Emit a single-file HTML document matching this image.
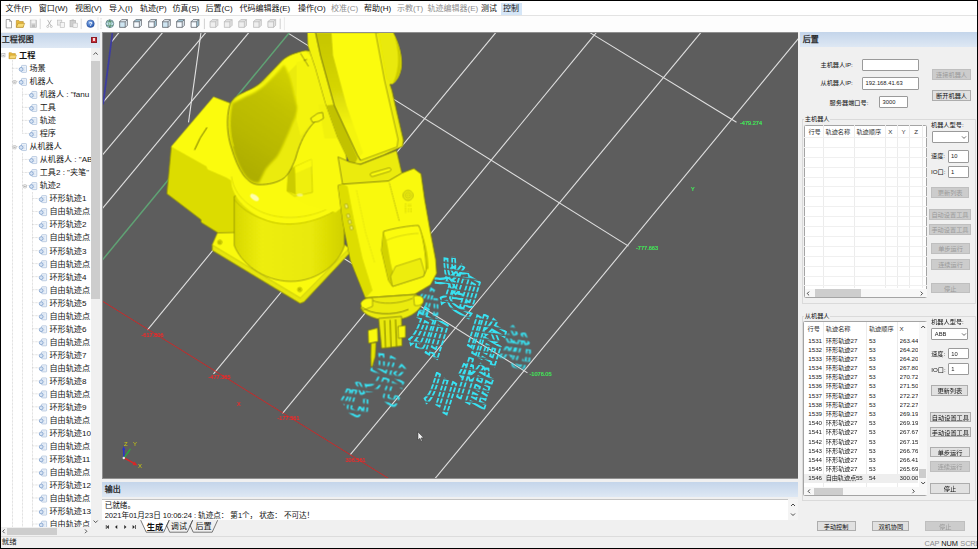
<!DOCTYPE html><html lang="zh"><head><meta charset="utf-8"><title>后置</title><style>
*{box-sizing:border-box;margin:0;padding:0}
html,body{width:978px;height:549px;overflow:hidden;background:#000}
body{position:relative;font-family:"Liberation Sans","Noto Sans CJK SC",sans-serif;font-size:8px;color:#000;line-height:1}
.a{position:absolute;white-space:nowrap}
#app{position:absolute;left:1px;top:1px;width:975.5px;height:546.5px;background:#f0f0f0;overflow:hidden;filter:blur(0.35px)}
.t{position:absolute;white-space:nowrap;line-height:10px;height:10px}
.g{color:#8a8a8a}
.hdr{position:absolute;background:linear-gradient(#c4d5ea,#dee8f4);}
.btn{position:absolute;background:#e1e1e1;border:0.6px solid #adadad;text-align:center;font-size:6.2px;white-space:nowrap;overflow:hidden;color:#111}
.btn.d{background:#cccccc;border-color:#bfbfbf;color:#9a9a9a}
.inp{position:absolute;background:#fff;border:0.7px solid #9a9a9a;border-radius:1px;font-size:5.8px;white-space:nowrap;overflow:hidden;color:#222}
.lb{position:absolute;background:#fff;border:0.8px solid #a4a4a4;border-radius:1.5px;overflow:hidden}
.sm{font-size:6.2px;position:absolute;white-space:nowrap;line-height:8px;height:8px;color:#222}
.lab{font-size:6.2px;position:absolute;white-space:nowrap;line-height:8px;height:8px;color:#111}
</style></head><body><div id="app"><div class="a" style="left:0.00px;top:0.00px;width:976.00px;height:14.60px;background:#fff"></div><div class="a" style="left:0.00px;top:14.40px;width:976.00px;height:0.80px;background:#e3e3e3"></div><div class="a" style="left:0.00px;top:15.20px;width:976.00px;height:15.80px;background:#fdfdfd"></div><div class="t" style="left:4.50px;top:2.80px;color:#111">文件(F)</div><div class="t" style="left:37.80px;top:2.80px;color:#111">窗口(W)</div><div class="t" style="left:74.00px;top:2.80px;color:#111">视图(V)</div><div class="t" style="left:108.00px;top:2.80px;color:#111">导入(I)</div><div class="t" style="left:139.00px;top:2.80px;color:#111">轨迹(P)</div><div class="t" style="left:171.50px;top:2.80px;color:#111">仿真(S)</div><div class="t" style="left:204.50px;top:2.80px;color:#111">后置(C)</div><div class="t" style="left:238.50px;top:2.80px;color:#111">代码编辑器(E)</div><div class="t" style="left:297.00px;top:2.80px;color:#111">操作(O)</div><div class="t" style="left:330.00px;top:2.80px;color:#8d8d8d">校准(C)</div><div class="t" style="left:363.00px;top:2.80px;color:#111">帮助(H)</div><div class="t" style="left:396.00px;top:2.80px;color:#8d8d8d">示教(T)</div><div class="t" style="left:426.50px;top:2.80px;color:#8d8d8d">轨迹编辑器(E)</div><div class="t" style="left:480.00px;top:2.80px;color:#111">测试</div><div class="a" style="left:500.00px;top:1.50px;width:20.50px;height:12.50px;background:#d5e6f7"></div><div class="t" style="left:502.00px;top:2.80px;color:#111">控制</div><svg class="a" style="left:0px;top:15px" width="300" height="16" viewBox="1 16 300 16"><g filter="url(#tbl)"><defs><filter id="tbl"><feGaussianBlur stdDeviation="0.35"/></filter><radialGradient id="hb" cx="0.4" cy="0.35" r="0.7"><stop offset="0" stop-color="#8ab4ee"/><stop offset="1" stop-color="#1f4fa8"/></radialGradient></defs><path d="M6.2 19.5 h3.4 l1.9 1.9 v6.5 h-5.3z" fill="#fff" stroke="#6c6c6c" stroke-width="0.6"/><path d="M9.6 19.5 v1.9 h1.9" fill="none" stroke="#6c6c6c" stroke-width="0.5"/><path d="M16.3 20.5 h2.6 l0.8 1 h3.6 v5.8 h-7z" fill="#e8b93a" stroke="#a87c18" stroke-width="0.5"/><path d="M16.3 27.3 l1.8 -4 h6.6 l-1.6 4z" fill="#f7da72" stroke="#a87c18" stroke-width="0.5"/><rect x="30.2" y="20.099999999999998" width="6.4" height="7.2" fill="#d9d9d9" stroke="#b5b5b5" stroke-width="0.6"/><rect x="31.6" y="20.3" width="3.6" height="2.8" fill="#f2f2f2"/><rect x="31.8" y="24.5" width="3.2" height="2.6" fill="#bdbdbd"/><path d="M40.2 18.7 v10.4" stroke="#c9c9c9" stroke-width="0.7"/><path d="M47.6 19.9 L51 25.7 M51.4 19.9 L48 25.7" stroke="#a9a9a9" stroke-width="0.8" fill="none"/><circle cx="47.7" cy="26.5" r="1" fill="none" stroke="#a9a9a9" stroke-width="0.6"/><circle cx="51.3" cy="26.5" r="1" fill="none" stroke="#a9a9a9" stroke-width="0.6"/><rect x="57.6" y="20.099999999999998" width="4.2" height="5" fill="#ececec" stroke="#b9b9b9" stroke-width="0.6"/><rect x="60.2" y="22.5" width="4.4" height="5" fill="#f4f4f4" stroke="#b9b9b9" stroke-width="0.6"/><rect x="70" y="20.3" width="5.6" height="6.6" fill="#cfcfcf" stroke="#aeaeae" stroke-width="0.6"/><rect x="71.6" y="19.5" width="2.4" height="1.6" fill="#bdbdbd"/><rect x="73" y="23.099999999999998" width="4.6" height="4.6" fill="#f1f1f1" stroke="#b5b5b5" stroke-width="0.5"/><path d="M81.2 18.7 v10.4" stroke="#c9c9c9" stroke-width="0.7"/><circle cx="90.5" cy="23.7" r="3.8" fill="url(#hb)" stroke="#1b3f8a" stroke-width="0.4"/><text x="88.9" y="25.8" font-family="Liberation Sans, sans-serif" font-size="5.8" font-weight="bold" fill="#fff">?</text><path d="M98 17.2 v13" stroke="#dcdcdc" stroke-width="0.6"/><path d="M101 18.2 v11" stroke="#b5b5b5" stroke-width="0.7" stroke-dasharray="0.7 0.7"/><circle cx="109.8" cy="23.7" r="3.9" fill="#bfe0ea" stroke="#4d6a78" stroke-width="0.7"/><path d="M106.5 22.2 q3.3 -2 6.6 0 M106.3 25.2 q3.5 2 7 0 M109.8 19.8 q-2.4 3.9 0 7.8 M109.8 19.8 q2.4 3.9 0 7.8" fill="none" stroke="#3f7a4a" stroke-width="0.6"/><g transform="translate(119.3 19.299999999999997)" stroke="#5a6066" stroke-width="0.6" stroke-linejoin="round"><path d="M0.4 2.4 L2.4 0.4 H8 V6 L6 8 H0.4Z" fill="#ffffff"/><path d="M0.4 2.4 H6 V8 H0.4Z" fill="#cfe6f2"/><path d="M0.4 2.4 L2.4 0.4 H8 L6 2.4Z" fill="#eef6fb"/><path d="M6 2.4 L8 0.4 V6 L6 8Z" fill="#e4eff6"/></g><g transform="translate(133.4 19.299999999999997)" stroke="#5a6066" stroke-width="0.6" stroke-linejoin="round"><path d="M0.4 2.4 L2.4 0.4 H8 V6 L6 8 H0.4Z" fill="#ffffff"/><path d="M0.4 2.4 H6 V8 H0.4Z" fill="#f6fbff"/><path d="M0.4 2.4 L2.4 0.4 H8 L6 2.4Z" fill="#a8cfe0"/><path d="M6 2.4 L8 0.4 V6 L6 8Z" fill="#e4eff6"/></g><g transform="translate(148.3 19.299999999999997)" stroke="#5a6066" stroke-width="0.6" stroke-linejoin="round"><path d="M0.4 2.4 L2.4 0.4 H8 V6 L6 8 H0.4Z" fill="#ffffff"/><path d="M0.4 2.4 H6 V8 H0.4Z" fill="#f6fbff"/><path d="M0.4 2.4 L2.4 0.4 H8 L6 2.4Z" fill="#eef6fb"/><path d="M6 2.4 L8 0.4 V6 L6 8Z" fill="#a8cfe0"/></g><g transform="translate(162.2 19.299999999999997)" stroke="#5a6066" stroke-width="0.6" stroke-linejoin="round"><path d="M0.4 2.4 L2.4 0.4 H8 V6 L6 8 H0.4Z" fill="#ffffff"/><path d="M0.4 2.4 H6 V8 H0.4Z" fill="#cfe6f2"/><path d="M0.4 2.4 L2.4 0.4 H8 L6 2.4Z" fill="#eef6fb"/><path d="M6 2.4 L8 0.4 V6 L6 8Z" fill="#e4eff6"/></g><g transform="translate(176.3 19.299999999999997)" stroke="#5a6066" stroke-width="0.6" stroke-linejoin="round"><path d="M0.4 2.4 L2.4 0.4 H8 V6 L6 8 H0.4Z" fill="#ffffff"/><path d="M0.4 2.4 H6 V8 H0.4Z" fill="#f6fbff"/><path d="M0.4 2.4 L2.4 0.4 H8 L6 2.4Z" fill="#a8cfe0"/><path d="M6 2.4 L8 0.4 V6 L6 8Z" fill="#e4eff6"/></g><g transform="translate(190.8 19.299999999999997)" stroke="#5a6066" stroke-width="0.6" stroke-linejoin="round"><path d="M0.4 2.4 L2.4 0.4 H8 V6 L6 8 H0.4Z" fill="#ffffff"/><path d="M0.4 2.4 H6 V8 H0.4Z" fill="#f6fbff"/><path d="M0.4 2.4 L2.4 0.4 H8 L6 2.4Z" fill="#eef6fb"/><path d="M6 2.4 L8 0.4 V6 L6 8Z" fill="#a8cfe0"/></g><path d="M204.4 18.7 v10.4" stroke="#bdbdbd" stroke-width="0.7"/><g transform="translate(209.8 19.299999999999997)" stroke="#b9b9b9" stroke-width="0.6" stroke-linejoin="round"><path d="M0.4 2.4 L2.4 0.4 H8 V6 L6 8 H0.4Z" fill="#ffffff"/><path d="M0.4 2.4 H6 V8 H0.4Z" fill="#efefef"/><path d="M0.4 2.4 L2.4 0.4 H8 L6 2.4Z" fill="#e4e4e4"/><path d="M6 2.4 L8 0.4 V6 L6 8Z" fill="#e4e4e4"/></g><g transform="translate(224 19.299999999999997)" stroke="#b9b9b9" stroke-width="0.6" stroke-linejoin="round"><path d="M0.4 2.4 L2.4 0.4 H8 V6 L6 8 H0.4Z" fill="#ffffff"/><path d="M0.4 2.4 H6 V8 H0.4Z" fill="#efefef"/><path d="M0.4 2.4 L2.4 0.4 H8 L6 2.4Z" fill="#e4e4e4"/><path d="M6 2.4 L8 0.4 V6 L6 8Z" fill="#e4e4e4"/></g><g transform="translate(238.4 19.299999999999997)" stroke="#b9b9b9" stroke-width="0.6" stroke-linejoin="round"><path d="M0.4 2.4 L2.4 0.4 H8 V6 L6 8 H0.4Z" fill="#ffffff"/><path d="M0.4 2.4 H6 V8 H0.4Z" fill="#efefef"/><path d="M0.4 2.4 L2.4 0.4 H8 L6 2.4Z" fill="#e4e4e4"/><path d="M6 2.4 L8 0.4 V6 L6 8Z" fill="#e4e4e4"/></g><g transform="translate(253.2 19.299999999999997)" stroke="#b9b9b9" stroke-width="0.6" stroke-linejoin="round"><path d="M0.4 2.4 L2.4 0.4 H8 V6 L6 8 H0.4Z" fill="#ffffff"/><path d="M0.4 2.4 H6 V8 H0.4Z" fill="#efefef"/><path d="M0.4 2.4 L2.4 0.4 H8 L6 2.4Z" fill="#e4e4e4"/><path d="M6 2.4 L8 0.4 V6 L6 8Z" fill="#e4e4e4"/></g><g transform="translate(267.6 19.299999999999997)" stroke="#b9b9b9" stroke-width="0.6" stroke-linejoin="round"><path d="M0.4 2.4 L2.4 0.4 H8 V6 L6 8 H0.4Z" fill="#ffffff"/><path d="M0.4 2.4 H6 V8 H0.4Z" fill="#efefef"/><path d="M0.4 2.4 L2.4 0.4 H8 L6 2.4Z" fill="#e4e4e4"/><path d="M6 2.4 L8 0.4 V6 L6 8Z" fill="#e4e4e4"/></g><path d="M280.2 18.7 v10.4" stroke="#bdbdbd" stroke-width="0.7"/><path d="M284.4 17.2 v13" stroke="#dcdcdc" stroke-width="0.6"/></g></svg><div class="hdr" style="left:0.00px;top:31.50px;width:99.30px;height:15.00px;"></div><div class="t" style="left:0.80px;top:34.00px;font-size:8px;color:#1a1a1a;-webkit-text-stroke:0.25px #1a1a1a">工程视图</div><div class="a" style="left:90.30px;top:35.80px;width:5.80px;height:6.00px;background:#c8303a;border:0.5px solid #8d1c24"></div><div class="a" style="left:92.40px;top:37.20px;width:1.50px;height:3.20px;background:#f3dada"></div><div class="a" style="left:0.00px;top:47.00px;width:90.00px;height:479.00px;background:#fff"></div><div class="a" style="left:90.00px;top:47.00px;width:9.30px;height:479.00px;background:#f0f0f0"></div><div class="a" style="left:90.40px;top:60.00px;width:8.50px;height:238.00px;background:#cdcdcd"></div><svg class="a" style="left:90px;top:47px" width="9.3" height="479" viewBox="0 0 9.3 479"><path d="M2.6 6.6 L4.65 4.5 L6.7 6.6" fill="none" stroke="#444" stroke-width="0.9"/><path d="M2.6 472.6 L4.65 474.7 L6.7 472.6" fill="none" stroke="#444" stroke-width="0.9"/></svg><svg class="a" style="left:0px;top:47px" width="90" height="479" viewBox="1 48 90 479"><g stroke="#b9b9b9" stroke-width="0.6" stroke-dasharray="0.7 0.7" fill="none"><path d="M12.5 60 V527"/><path d="M22.5 88 V133"/><path d="M22.5 153 V527"/><path d="M32.5 192 V527"/><path d="M11.9 68.32 H18.4"/><path d="M11.9 81.34 H18.4"/><path d="M22.2 94.36 H28.7"/><path d="M22.2 107.38 H28.7"/><path d="M22.2 120.39999999999999 H28.7"/><path d="M22.2 133.42000000000002 H28.7"/><path d="M11.9 146.44 H18.4"/><path d="M22.2 159.45999999999998 H28.7"/><path d="M22.2 172.48 H28.7"/><path d="M22.2 185.5 H28.7"/><path d="M32.0 198.51999999999998 H38.5"/><path d="M32.0 211.54000000000002 H38.5"/><path d="M32.0 224.56 H38.5"/><path d="M32.0 237.57999999999998 H38.5"/><path d="M32.0 250.59999999999997 H38.5"/><path d="M32.0 263.62 H38.5"/><path d="M32.0 276.64 H38.5"/><path d="M32.0 289.65999999999997 H38.5"/><path d="M32.0 302.68 H38.5"/><path d="M32.0 315.7 H38.5"/><path d="M32.0 328.72 H38.5"/><path d="M32.0 341.74 H38.5"/><path d="M32.0 354.76 H38.5"/><path d="M32.0 367.78000000000003 H38.5"/><path d="M32.0 380.8 H38.5"/><path d="M32.0 393.82 H38.5"/><path d="M32.0 406.84 H38.5"/><path d="M32.0 419.86 H38.5"/><path d="M32.0 432.88 H38.5"/><path d="M32.0 445.9 H38.5"/><path d="M32.0 458.92 H38.5"/><path d="M32.0 471.94 H38.5"/><path d="M32.0 484.96 H38.5"/><path d="M32.0 497.98 H38.5"/><path d="M32.0 511.0 H38.5"/><path d="M32.0 524.02 H38.5"/></g><path d="M9.0 52.699999999999996 h2.4 l0.8 0.9 h3.2 v5 h-6.4z" fill="#e9b93c" stroke="#b98b1e" stroke-width="0.5"/><path d="M9.0 58.599999999999994 l1.3 -3.4 h6.2 l-1.2 3.4z" fill="#f6d774" stroke="#b98b1e" stroke-width="0.4"/><rect x="1.8" y="53.699999999999996" width="3.2" height="3.2" fill="#fff" stroke="#9a9a9a" stroke-width="0.5"/><path d="M2.5 55.3 h1.8" stroke="#444" stroke-width="0.5"/><g transform="translate(19.1 69.11999999999999)"><rect x="2.4" y="-3.7" width="5" height="7" rx="0.6" fill="#eef4fb" stroke="#9ab2d2" stroke-width="0.6"/><path d="M3.6 -1.8 h2.6 M3.6 -0.2 h2.6 M3.6 1.4 h2.6" stroke="#bccbe0" stroke-width="0.4"/><circle cx="2" cy="0.2" r="1.9" fill="#d6e3f3" stroke="#6f94c6" stroke-width="0.7"/></g><g transform="translate(19.1 82.14)"><rect x="2.4" y="-3.7" width="5" height="7" rx="0.6" fill="#eef4fb" stroke="#9ab2d2" stroke-width="0.6"/><path d="M3.6 -1.8 h2.6 M3.6 -0.2 h2.6 M3.6 1.4 h2.6" stroke="#bccbe0" stroke-width="0.4"/><circle cx="2" cy="0.2" r="1.9" fill="#d6e3f3" stroke="#6f94c6" stroke-width="0.7"/></g><rect x="13.0" y="80.54" width="3.2" height="3.2" rx="0.8" fill="#fff" stroke="#9a9a9a" stroke-width="0.5"/><path d="M13.7 82.14 h1.8" stroke="#444" stroke-width="0.5"/><g transform="translate(29.4 95.16)"><rect x="2.4" y="-3.7" width="5" height="7" rx="0.6" fill="#eef4fb" stroke="#9ab2d2" stroke-width="0.6"/><path d="M3.6 -1.8 h2.6 M3.6 -0.2 h2.6 M3.6 1.4 h2.6" stroke="#bccbe0" stroke-width="0.4"/><circle cx="2" cy="0.2" r="1.9" fill="#d6e3f3" stroke="#6f94c6" stroke-width="0.7"/></g><g transform="translate(29.4 108.17999999999999)"><rect x="2.4" y="-3.7" width="5" height="7" rx="0.6" fill="#eef4fb" stroke="#9ab2d2" stroke-width="0.6"/><path d="M3.6 -1.8 h2.6 M3.6 -0.2 h2.6 M3.6 1.4 h2.6" stroke="#bccbe0" stroke-width="0.4"/><circle cx="2" cy="0.2" r="1.9" fill="#d6e3f3" stroke="#6f94c6" stroke-width="0.7"/></g><g transform="translate(29.4 121.19999999999999)"><rect x="2.4" y="-3.7" width="5" height="7" rx="0.6" fill="#eef4fb" stroke="#9ab2d2" stroke-width="0.6"/><path d="M3.6 -1.8 h2.6 M3.6 -0.2 h2.6 M3.6 1.4 h2.6" stroke="#bccbe0" stroke-width="0.4"/><circle cx="2" cy="0.2" r="1.9" fill="#d6e3f3" stroke="#6f94c6" stroke-width="0.7"/></g><g transform="translate(29.4 134.22000000000003)"><rect x="2.4" y="-3.7" width="5" height="7" rx="0.6" fill="#eef4fb" stroke="#9ab2d2" stroke-width="0.6"/><path d="M3.6 -1.8 h2.6 M3.6 -0.2 h2.6 M3.6 1.4 h2.6" stroke="#bccbe0" stroke-width="0.4"/><circle cx="2" cy="0.2" r="1.9" fill="#d6e3f3" stroke="#6f94c6" stroke-width="0.7"/></g><g transform="translate(19.1 147.24)"><rect x="2.4" y="-3.7" width="5" height="7" rx="0.6" fill="#eef4fb" stroke="#9ab2d2" stroke-width="0.6"/><path d="M3.6 -1.8 h2.6 M3.6 -0.2 h2.6 M3.6 1.4 h2.6" stroke="#bccbe0" stroke-width="0.4"/><circle cx="2" cy="0.2" r="1.9" fill="#d6e3f3" stroke="#6f94c6" stroke-width="0.7"/></g><rect x="13.0" y="145.64" width="3.2" height="3.2" rx="0.8" fill="#fff" stroke="#9a9a9a" stroke-width="0.5"/><path d="M13.7 147.24 h1.8" stroke="#444" stroke-width="0.5"/><g transform="translate(29.4 160.26)"><rect x="2.4" y="-3.7" width="5" height="7" rx="0.6" fill="#eef4fb" stroke="#9ab2d2" stroke-width="0.6"/><path d="M3.6 -1.8 h2.6 M3.6 -0.2 h2.6 M3.6 1.4 h2.6" stroke="#bccbe0" stroke-width="0.4"/><circle cx="2" cy="0.2" r="1.9" fill="#d6e3f3" stroke="#6f94c6" stroke-width="0.7"/></g><g transform="translate(29.4 173.28)"><rect x="2.4" y="-3.7" width="5" height="7" rx="0.6" fill="#eef4fb" stroke="#9ab2d2" stroke-width="0.6"/><path d="M3.6 -1.8 h2.6 M3.6 -0.2 h2.6 M3.6 1.4 h2.6" stroke="#bccbe0" stroke-width="0.4"/><circle cx="2" cy="0.2" r="1.9" fill="#d6e3f3" stroke="#6f94c6" stroke-width="0.7"/></g><g transform="translate(29.4 186.3)"><rect x="2.4" y="-3.7" width="5" height="7" rx="0.6" fill="#eef4fb" stroke="#9ab2d2" stroke-width="0.6"/><path d="M3.6 -1.8 h2.6 M3.6 -0.2 h2.6 M3.6 1.4 h2.6" stroke="#bccbe0" stroke-width="0.4"/><circle cx="2" cy="0.2" r="1.9" fill="#d6e3f3" stroke="#6f94c6" stroke-width="0.7"/></g><rect x="23.3" y="184.7" width="3.2" height="3.2" rx="0.8" fill="#fff" stroke="#9a9a9a" stroke-width="0.5"/><path d="M24.0 186.3 h1.8" stroke="#444" stroke-width="0.5"/><g transform="translate(39.2 199.32)"><rect x="2.4" y="-3.7" width="5" height="7" rx="0.6" fill="#eef4fb" stroke="#9ab2d2" stroke-width="0.6"/><path d="M3.6 -1.8 h2.6 M3.6 -0.2 h2.6 M3.6 1.4 h2.6" stroke="#bccbe0" stroke-width="0.4"/><circle cx="2" cy="0.2" r="1.9" fill="#d6e3f3" stroke="#6f94c6" stroke-width="0.7"/></g><g transform="translate(39.2 212.34000000000003)"><rect x="2.4" y="-3.7" width="5" height="7" rx="0.6" fill="#eef4fb" stroke="#9ab2d2" stroke-width="0.6"/><path d="M3.6 -1.8 h2.6 M3.6 -0.2 h2.6 M3.6 1.4 h2.6" stroke="#bccbe0" stroke-width="0.4"/><circle cx="2" cy="0.2" r="1.9" fill="#d6e3f3" stroke="#6f94c6" stroke-width="0.7"/></g><g transform="translate(39.2 225.36)"><rect x="2.4" y="-3.7" width="5" height="7" rx="0.6" fill="#eef4fb" stroke="#9ab2d2" stroke-width="0.6"/><path d="M3.6 -1.8 h2.6 M3.6 -0.2 h2.6 M3.6 1.4 h2.6" stroke="#bccbe0" stroke-width="0.4"/><circle cx="2" cy="0.2" r="1.9" fill="#d6e3f3" stroke="#6f94c6" stroke-width="0.7"/></g><g transform="translate(39.2 238.38)"><rect x="2.4" y="-3.7" width="5" height="7" rx="0.6" fill="#eef4fb" stroke="#9ab2d2" stroke-width="0.6"/><path d="M3.6 -1.8 h2.6 M3.6 -0.2 h2.6 M3.6 1.4 h2.6" stroke="#bccbe0" stroke-width="0.4"/><circle cx="2" cy="0.2" r="1.9" fill="#d6e3f3" stroke="#6f94c6" stroke-width="0.7"/></g><g transform="translate(39.2 251.39999999999998)"><rect x="2.4" y="-3.7" width="5" height="7" rx="0.6" fill="#eef4fb" stroke="#9ab2d2" stroke-width="0.6"/><path d="M3.6 -1.8 h2.6 M3.6 -0.2 h2.6 M3.6 1.4 h2.6" stroke="#bccbe0" stroke-width="0.4"/><circle cx="2" cy="0.2" r="1.9" fill="#d6e3f3" stroke="#6f94c6" stroke-width="0.7"/></g><g transform="translate(39.2 264.42)"><rect x="2.4" y="-3.7" width="5" height="7" rx="0.6" fill="#eef4fb" stroke="#9ab2d2" stroke-width="0.6"/><path d="M3.6 -1.8 h2.6 M3.6 -0.2 h2.6 M3.6 1.4 h2.6" stroke="#bccbe0" stroke-width="0.4"/><circle cx="2" cy="0.2" r="1.9" fill="#d6e3f3" stroke="#6f94c6" stroke-width="0.7"/></g><g transform="translate(39.2 277.44)"><rect x="2.4" y="-3.7" width="5" height="7" rx="0.6" fill="#eef4fb" stroke="#9ab2d2" stroke-width="0.6"/><path d="M3.6 -1.8 h2.6 M3.6 -0.2 h2.6 M3.6 1.4 h2.6" stroke="#bccbe0" stroke-width="0.4"/><circle cx="2" cy="0.2" r="1.9" fill="#d6e3f3" stroke="#6f94c6" stroke-width="0.7"/></g><g transform="translate(39.2 290.46)"><rect x="2.4" y="-3.7" width="5" height="7" rx="0.6" fill="#eef4fb" stroke="#9ab2d2" stroke-width="0.6"/><path d="M3.6 -1.8 h2.6 M3.6 -0.2 h2.6 M3.6 1.4 h2.6" stroke="#bccbe0" stroke-width="0.4"/><circle cx="2" cy="0.2" r="1.9" fill="#d6e3f3" stroke="#6f94c6" stroke-width="0.7"/></g><g transform="translate(39.2 303.48)"><rect x="2.4" y="-3.7" width="5" height="7" rx="0.6" fill="#eef4fb" stroke="#9ab2d2" stroke-width="0.6"/><path d="M3.6 -1.8 h2.6 M3.6 -0.2 h2.6 M3.6 1.4 h2.6" stroke="#bccbe0" stroke-width="0.4"/><circle cx="2" cy="0.2" r="1.9" fill="#d6e3f3" stroke="#6f94c6" stroke-width="0.7"/></g><g transform="translate(39.2 316.5)"><rect x="2.4" y="-3.7" width="5" height="7" rx="0.6" fill="#eef4fb" stroke="#9ab2d2" stroke-width="0.6"/><path d="M3.6 -1.8 h2.6 M3.6 -0.2 h2.6 M3.6 1.4 h2.6" stroke="#bccbe0" stroke-width="0.4"/><circle cx="2" cy="0.2" r="1.9" fill="#d6e3f3" stroke="#6f94c6" stroke-width="0.7"/></g><g transform="translate(39.2 329.52000000000004)"><rect x="2.4" y="-3.7" width="5" height="7" rx="0.6" fill="#eef4fb" stroke="#9ab2d2" stroke-width="0.6"/><path d="M3.6 -1.8 h2.6 M3.6 -0.2 h2.6 M3.6 1.4 h2.6" stroke="#bccbe0" stroke-width="0.4"/><circle cx="2" cy="0.2" r="1.9" fill="#d6e3f3" stroke="#6f94c6" stroke-width="0.7"/></g><g transform="translate(39.2 342.54)"><rect x="2.4" y="-3.7" width="5" height="7" rx="0.6" fill="#eef4fb" stroke="#9ab2d2" stroke-width="0.6"/><path d="M3.6 -1.8 h2.6 M3.6 -0.2 h2.6 M3.6 1.4 h2.6" stroke="#bccbe0" stroke-width="0.4"/><circle cx="2" cy="0.2" r="1.9" fill="#d6e3f3" stroke="#6f94c6" stroke-width="0.7"/></g><g transform="translate(39.2 355.56)"><rect x="2.4" y="-3.7" width="5" height="7" rx="0.6" fill="#eef4fb" stroke="#9ab2d2" stroke-width="0.6"/><path d="M3.6 -1.8 h2.6 M3.6 -0.2 h2.6 M3.6 1.4 h2.6" stroke="#bccbe0" stroke-width="0.4"/><circle cx="2" cy="0.2" r="1.9" fill="#d6e3f3" stroke="#6f94c6" stroke-width="0.7"/></g><g transform="translate(39.2 368.58000000000004)"><rect x="2.4" y="-3.7" width="5" height="7" rx="0.6" fill="#eef4fb" stroke="#9ab2d2" stroke-width="0.6"/><path d="M3.6 -1.8 h2.6 M3.6 -0.2 h2.6 M3.6 1.4 h2.6" stroke="#bccbe0" stroke-width="0.4"/><circle cx="2" cy="0.2" r="1.9" fill="#d6e3f3" stroke="#6f94c6" stroke-width="0.7"/></g><g transform="translate(39.2 381.6)"><rect x="2.4" y="-3.7" width="5" height="7" rx="0.6" fill="#eef4fb" stroke="#9ab2d2" stroke-width="0.6"/><path d="M3.6 -1.8 h2.6 M3.6 -0.2 h2.6 M3.6 1.4 h2.6" stroke="#bccbe0" stroke-width="0.4"/><circle cx="2" cy="0.2" r="1.9" fill="#d6e3f3" stroke="#6f94c6" stroke-width="0.7"/></g><g transform="translate(39.2 394.62)"><rect x="2.4" y="-3.7" width="5" height="7" rx="0.6" fill="#eef4fb" stroke="#9ab2d2" stroke-width="0.6"/><path d="M3.6 -1.8 h2.6 M3.6 -0.2 h2.6 M3.6 1.4 h2.6" stroke="#bccbe0" stroke-width="0.4"/><circle cx="2" cy="0.2" r="1.9" fill="#d6e3f3" stroke="#6f94c6" stroke-width="0.7"/></g><g transform="translate(39.2 407.64)"><rect x="2.4" y="-3.7" width="5" height="7" rx="0.6" fill="#eef4fb" stroke="#9ab2d2" stroke-width="0.6"/><path d="M3.6 -1.8 h2.6 M3.6 -0.2 h2.6 M3.6 1.4 h2.6" stroke="#bccbe0" stroke-width="0.4"/><circle cx="2" cy="0.2" r="1.9" fill="#d6e3f3" stroke="#6f94c6" stroke-width="0.7"/></g><g transform="translate(39.2 420.66)"><rect x="2.4" y="-3.7" width="5" height="7" rx="0.6" fill="#eef4fb" stroke="#9ab2d2" stroke-width="0.6"/><path d="M3.6 -1.8 h2.6 M3.6 -0.2 h2.6 M3.6 1.4 h2.6" stroke="#bccbe0" stroke-width="0.4"/><circle cx="2" cy="0.2" r="1.9" fill="#d6e3f3" stroke="#6f94c6" stroke-width="0.7"/></g><g transform="translate(39.2 433.68)"><rect x="2.4" y="-3.7" width="5" height="7" rx="0.6" fill="#eef4fb" stroke="#9ab2d2" stroke-width="0.6"/><path d="M3.6 -1.8 h2.6 M3.6 -0.2 h2.6 M3.6 1.4 h2.6" stroke="#bccbe0" stroke-width="0.4"/><circle cx="2" cy="0.2" r="1.9" fill="#d6e3f3" stroke="#6f94c6" stroke-width="0.7"/></g><g transform="translate(39.2 446.7)"><rect x="2.4" y="-3.7" width="5" height="7" rx="0.6" fill="#eef4fb" stroke="#9ab2d2" stroke-width="0.6"/><path d="M3.6 -1.8 h2.6 M3.6 -0.2 h2.6 M3.6 1.4 h2.6" stroke="#bccbe0" stroke-width="0.4"/><circle cx="2" cy="0.2" r="1.9" fill="#d6e3f3" stroke="#6f94c6" stroke-width="0.7"/></g><g transform="translate(39.2 459.72)"><rect x="2.4" y="-3.7" width="5" height="7" rx="0.6" fill="#eef4fb" stroke="#9ab2d2" stroke-width="0.6"/><path d="M3.6 -1.8 h2.6 M3.6 -0.2 h2.6 M3.6 1.4 h2.6" stroke="#bccbe0" stroke-width="0.4"/><circle cx="2" cy="0.2" r="1.9" fill="#d6e3f3" stroke="#6f94c6" stroke-width="0.7"/></g><g transform="translate(39.2 472.74)"><rect x="2.4" y="-3.7" width="5" height="7" rx="0.6" fill="#eef4fb" stroke="#9ab2d2" stroke-width="0.6"/><path d="M3.6 -1.8 h2.6 M3.6 -0.2 h2.6 M3.6 1.4 h2.6" stroke="#bccbe0" stroke-width="0.4"/><circle cx="2" cy="0.2" r="1.9" fill="#d6e3f3" stroke="#6f94c6" stroke-width="0.7"/></g><g transform="translate(39.2 485.76)"><rect x="2.4" y="-3.7" width="5" height="7" rx="0.6" fill="#eef4fb" stroke="#9ab2d2" stroke-width="0.6"/><path d="M3.6 -1.8 h2.6 M3.6 -0.2 h2.6 M3.6 1.4 h2.6" stroke="#bccbe0" stroke-width="0.4"/><circle cx="2" cy="0.2" r="1.9" fill="#d6e3f3" stroke="#6f94c6" stroke-width="0.7"/></g><g transform="translate(39.2 498.78000000000003)"><rect x="2.4" y="-3.7" width="5" height="7" rx="0.6" fill="#eef4fb" stroke="#9ab2d2" stroke-width="0.6"/><path d="M3.6 -1.8 h2.6 M3.6 -0.2 h2.6 M3.6 1.4 h2.6" stroke="#bccbe0" stroke-width="0.4"/><circle cx="2" cy="0.2" r="1.9" fill="#d6e3f3" stroke="#6f94c6" stroke-width="0.7"/></g><g transform="translate(39.2 511.8)"><rect x="2.4" y="-3.7" width="5" height="7" rx="0.6" fill="#eef4fb" stroke="#9ab2d2" stroke-width="0.6"/><path d="M3.6 -1.8 h2.6 M3.6 -0.2 h2.6 M3.6 1.4 h2.6" stroke="#bccbe0" stroke-width="0.4"/><circle cx="2" cy="0.2" r="1.9" fill="#d6e3f3" stroke="#6f94c6" stroke-width="0.7"/></g><g transform="translate(39.2 524.8199999999999)"><rect x="2.4" y="-3.7" width="5" height="7" rx="0.6" fill="#eef4fb" stroke="#9ab2d2" stroke-width="0.6"/><path d="M3.6 -1.8 h2.6 M3.6 -0.2 h2.6 M3.6 1.4 h2.6" stroke="#bccbe0" stroke-width="0.4"/><circle cx="2" cy="0.2" r="1.9" fill="#d6e3f3" stroke="#6f94c6" stroke-width="0.7"/></g></svg><div class="t" style="left:18.00px;top:50.20px;font-size:8.2px;font-weight:bold;color:#111;">工程</div><div class="t" style="left:28.40px;top:63.22px;font-size:8.1px;color:#151515;">场景</div><div class="t" style="left:28.40px;top:76.24px;font-size:8.1px;color:#151515;">机器人</div><div class="t" style="left:38.70px;top:89.26px;font-size:8.1px;color:#151515;">机器人 : "fanu</div><div class="t" style="left:38.70px;top:102.28px;font-size:8.1px;color:#151515;">工具</div><div class="t" style="left:38.70px;top:115.30px;font-size:8.1px;color:#151515;">轨迹</div><div class="t" style="left:38.70px;top:128.32px;font-size:8.1px;color:#151515;">程序</div><div class="t" style="left:28.40px;top:141.34px;font-size:8.1px;color:#151515;">从机器人</div><div class="t" style="left:38.70px;top:154.36px;font-size:8.1px;color:#151515;">从机器人 : "AB</div><div class="t" style="left:38.70px;top:167.38px;font-size:8.1px;color:#151515;">工具2 : "夹笔"</div><div class="t" style="left:38.70px;top:180.40px;font-size:8.1px;color:#151515;">轨迹2</div><div class="t" style="left:48.50px;top:193.42px;font-size:8.1px;color:#151515;">环形轨迹1</div><div class="t" style="left:48.50px;top:206.44px;font-size:8.1px;color:#151515;">自由轨迹点</div><div class="t" style="left:48.50px;top:219.46px;font-size:8.1px;color:#151515;">环形轨迹2</div><div class="t" style="left:48.50px;top:232.48px;font-size:8.1px;color:#151515;">自由轨迹点</div><div class="t" style="left:48.50px;top:245.50px;font-size:8.1px;color:#151515;">环形轨迹3</div><div class="t" style="left:48.50px;top:258.52px;font-size:8.1px;color:#151515;">自由轨迹点</div><div class="t" style="left:48.50px;top:271.54px;font-size:8.1px;color:#151515;">环形轨迹4</div><div class="t" style="left:48.50px;top:284.56px;font-size:8.1px;color:#151515;">自由轨迹点</div><div class="t" style="left:48.50px;top:297.58px;font-size:8.1px;color:#151515;">环形轨迹5</div><div class="t" style="left:48.50px;top:310.60px;font-size:8.1px;color:#151515;">自由轨迹点</div><div class="t" style="left:48.50px;top:323.62px;font-size:8.1px;color:#151515;">环形轨迹6</div><div class="t" style="left:48.50px;top:336.64px;font-size:8.1px;color:#151515;">自由轨迹点</div><div class="t" style="left:48.50px;top:349.66px;font-size:8.1px;color:#151515;">环形轨迹7</div><div class="t" style="left:48.50px;top:362.68px;font-size:8.1px;color:#151515;">自由轨迹点</div><div class="t" style="left:48.50px;top:375.70px;font-size:8.1px;color:#151515;">环形轨迹8</div><div class="t" style="left:48.50px;top:388.72px;font-size:8.1px;color:#151515;">自由轨迹点</div><div class="t" style="left:48.50px;top:401.74px;font-size:8.1px;color:#151515;">环形轨迹9</div><div class="t" style="left:48.50px;top:414.76px;font-size:8.1px;color:#151515;">自由轨迹点</div><div class="t" style="left:48.50px;top:427.78px;font-size:8.1px;color:#151515;">环形轨迹10</div><div class="t" style="left:48.50px;top:440.80px;font-size:8.1px;color:#151515;">自由轨迹点</div><div class="t" style="left:48.50px;top:453.82px;font-size:8.1px;color:#151515;">环形轨迹11</div><div class="t" style="left:48.50px;top:466.84px;font-size:8.1px;color:#151515;">自由轨迹点</div><div class="t" style="left:48.50px;top:479.86px;font-size:8.1px;color:#151515;">环形轨迹12</div><div class="t" style="left:48.50px;top:492.88px;font-size:8.1px;color:#151515;">自由轨迹点</div><div class="t" style="left:48.50px;top:505.90px;font-size:8.1px;color:#151515;">环形轨迹13</div><div class="t" style="left:48.50px;top:518.92px;font-size:8.1px;color:#151515;">自由轨迹点</div><div class="a" style="left:90.00px;top:47.00px;width:9.30px;height:479.00px;background:#f0f0f0"></div><div class="a" style="left:90.40px;top:60.00px;width:8.50px;height:238.00px;background:#cdcdcd"></div><svg class="a" style="left:90px;top:47px" width="9.3" height="479" viewBox="0 0 9.3 479"><path d="M2.6 6.6 L4.65 4.5 L6.7 6.6" fill="none" stroke="#444" stroke-width="0.9"/><path d="M2.6 472.6 L4.65 474.7 L6.7 472.6" fill="none" stroke="#444" stroke-width="0.9"/></svg><div class="a" style="left:0.00px;top:526.00px;width:99.30px;height:8.60px;background:#f0f0f0"></div><div class="a" style="left:5.50px;top:526.60px;width:50.50px;height:7.40px;background:#cdcdcd"></div><svg class="a" style="left:0px;top:526px" width="99" height="8.6" viewBox="1 527 99 8.6"><path d="M4.6 529.4 L2.7 531.3 L4.6 533.2 M85 529.4 L86.9 531.3 L85 533.2" fill="none" stroke="#444" stroke-width="0.9"/></svg><div class="a" style="left:100.80px;top:31.00px;width:696.20px;height:446.60px;background:#8f8f8f"></div><svg class="a" style="left:101.5px;top:31.6px" width="695" height="445.4" viewBox="102.5 32.6 695 445.4"><defs>
<filter id="bl" x="-5%" y="-5%" width="110%" height="110%"><feGaussianBlur stdDeviation="0.45"/></filter>
<linearGradient id="cyl" x1="0" x2="1" y1="0" y2="0"><stop offset="0" stop-color="#d8d806"/><stop offset="0.25" stop-color="#eeee07"/><stop offset="0.7" stop-color="#e9e907"/><stop offset="1" stop-color="#d1d105"/></linearGradient>
<linearGradient id="sh" gradientUnits="userSpaceOnUse" x1="296" y1="80" x2="238" y2="165"><stop offset="0" stop-color="#d0d006"/><stop offset="0.3" stop-color="#c2c205"/><stop offset="0.7" stop-color="#b8b804"/><stop offset="1" stop-color="#aeae03"/></linearGradient><filter id="bl2" x="-10%" y="-10%" width="120%" height="120%"><feGaussianBlur stdDeviation="0.9"/></filter>
<linearGradient id="bev" gradientUnits="userSpaceOnUse" x1="0" y1="33" x2="0" y2="125"><stop offset="0" stop-color="#c6c604"/><stop offset="0.6" stop-color="#d6d606"/><stop offset="1" stop-color="#f4f40a"/></linearGradient>
</defs>
<rect x="100" y="30" width="700" height="450" fill="#5d5d5d"/>
<!-- grid -->
<g id="grid" stroke="#e0e0e0" stroke-width="1.1" fill="none" filter="url(#bl)">
<path d="M162.3 32 L102 102.5"/><path d="M118.6 32 L110.6 42"/>
<path d="M205.5 32 L102 154.5"/>
<path d="M248.5 32 L102 208"/>
<path d="M200.5 32 L188 122"/>
<path d="M288 33 L628 245.7"/>
<path d="M589 32 L736 121.8"/>
<path d="M300 231 L527 372.5"/>
<path d="M495.5 32 L213 373.5"/>
<path d="M596 32 L282 413"/>
<path d="M700.5 32 L349.6 454.5"/>
<path d="M803 32 L433 480"/>
<path d="M251 203 L147 329.5"/>
</g>
<path d="M112 32 L102.6 104" stroke="#3e3ea0" stroke-width="1.8" fill="none" filter="url(#bl)"/>
<path d="M289 32 L102 259.5" stroke="#5fa274" stroke-width="1.5" fill="none" filter="url(#bl)"/>
<path d="M102 300.8 L392 480.5" stroke="#d42424" stroke-width="0.9" fill="none" filter="url(#bl)"/>
<!-- labels -->
<g font-family="Liberation Sans, sans-serif" font-size="5.6" filter="url(#bl)">
<g fill="#44e458" stroke="#44e458" stroke-width="0.25"><text x="739.5" y="124.2">-479.274</text><text x="635.5" y="249.8">-777.663</text><text x="529" y="375.6">-1076.05</text><text x="690.6" y="190.6" font-size="5.4">Y</text></g>
<g fill="#ee2c2c" stroke="#ee2c2c" stroke-width="0.2"><text x="141" y="336.4">-617.806</text><text x="208" y="378.6">-477.365</text><text x="277" y="420">-177.561</text><text x="345" y="461.4">306.561</text><text x="236.6" y="406">X</text></g>
</g>
<defs>
<pattern id="st1" patternUnits="userSpaceOnUse" width="40" height="6.4" patternTransform="rotate(8)"><rect x="0" y="0" width="40" height="4.9" fill="#fff"/></pattern>
<pattern id="st2" patternUnits="userSpaceOnUse" width="40" height="8" patternTransform="rotate(8)"><rect x="0" y="0" width="40" height="4.4" fill="#fff"/></pattern>
<mask id="dm1" maskUnits="userSpaceOnUse" x="330" y="240" width="230" height="190"><rect x="330" y="240" width="230" height="190" fill="url(#st1)"/></mask>
<mask id="dm2" maskUnits="userSpaceOnUse" x="330" y="240" width="230" height="190"><rect x="330" y="240" width="230" height="190" fill="url(#st2)"/></mask>
</defs>
<g id="traj" fill="none" stroke="#38e2f2" stroke-width="2.1" font-family="Noto Sans CJK SC, sans-serif" font-weight="700" filter="url(#bl)">
<g mask="url(#dm1)">
<text transform="matrix(0.731 0.425 -0.300 0.950 433.7 278.0)" font-size="34" >义</text>
<text transform="matrix(0.731 0.425 -0.300 0.950 438.9 297.5)" font-size="44" >迎</text>
<text transform="matrix(0.731 0.425 -0.300 0.950 407.9 338.5)" font-size="44" >加</text>
<text transform="matrix(0.731 0.425 -0.300 0.950 464.9 344.5)" font-size="44" >临</text>
<text transform="matrix(0.731 0.425 -0.300 0.950 452.9 389.5)" font-size="44" >惟</text>
<text transform="matrix(0.731 0.425 -0.300 0.950 423.7 397.3)" font-size="36" >川</text>
</g><g mask="url(#dm2)">
<text transform="matrix(0.731 0.425 -0.300 0.950 498.8 353.6)" font-size="38" >沁</text>
<text transform="matrix(0.731 0.425 -0.300 0.950 363.9 384.8)" font-size="46" >光</text>
<text transform="matrix(0.731 0.425 -0.300 0.950 338.7 403.3)" font-size="36" >心</text>
<text transform="matrix(0.731 0.425 -0.300 0.950 413.6 306.5)" font-size="30" >小</text>
</g></g><!-- ROBOT -->
<g id="robot" stroke-linejoin="round" filter="url(#bl)">
<!-- base plate -->
<path d="M217 232.5 L211.7 244.5 L211.7 250 L299.5 303 L303.5 301.5 L348.5 253.5 L348.5 248 L320 225 Z" fill="#e5e507" stroke="#8a8a08" stroke-width="0.72"/>
<path d="M217 232.5 L211.7 244.5 L299.8 297.5 L348.5 248 L320 225 Z" fill="#fafa09" stroke="#9a9a0a" stroke-width="0.4"/>
<circle cx="219.3" cy="241.8" r="2.1" fill="#fafa09" stroke="#6e6e06" stroke-width="0.5"/><circle cx="219.3" cy="241.8" r="0.9" fill="#bbbb04" stroke="#6e6e06" stroke-width="0.3"/>
<circle cx="299.2" cy="289.2" r="2.1" fill="#fafa09" stroke="#6e6e06" stroke-width="0.5"/><circle cx="299.2" cy="289.2" r="0.9" fill="#bbbb04" stroke="#6e6e06" stroke-width="0.3"/>
<!-- rear box -->
<path d="M213 96.6 L170.7 146.3 L166.3 193.3 L200.4 219.2 L200.6 222 L217.5 232.5 L240 232 L250 110 Z" fill="#dcdc05" stroke="#8a8a08" stroke-width="0.72"/>
<path d="M213 96.6 L170.7 146.3 L205.9 166 L207 169 L225.5 177 L237 184 L246 110 Z" fill="#fbfb0a"/>
<path d="M194 149.5 Q199 137 206.5 127" stroke="#5d5d05" stroke-width="0.9" fill="none"/>
<!-- base cylinder -->
<path d="M233.7 196 L233.7 245 C240 262 262 280.5 290 281 C318 281 339 262 343.8 245 L343.8 205 L290 170 Z" fill="url(#cyl)" stroke="#8a8a08" stroke-width="0.72"/>
<!-- cylinder top cap -->
<path d="M231 172 C228 188 236 204 260 217 C282 228 312 225 335 210 L346 200 L346 160 L300 120 L240 150 Z" fill="#fafa09"/>
<path d="M233.7 199 C240 208 252 215 262 218.5 C284 228 314 224 338 208" fill="none" stroke="#aaaa04" stroke-width="0.6"/>
<path d="M231 176 C233 192 244 204 262 212 C284 221 314 218 337 203" fill="none" stroke="#c6c605" stroke-width="0.5"/>
<ellipse cx="254" cy="197" rx="5" ry="2.6" transform="rotate(35 254 197)" fill="#ffffd8" opacity="0.8"/>
<!-- turret block behind shoulder (J2 housing) -->
<path d="M286 176 L292 150 L306 126 L324 112 L345 150 L350 200 L335 212 L310 205 L292 196 Z" fill="#f9f909"/>
<path d="M287.8 169.2 L310.8 159 L312 192 L294 196 L286.5 190.8 Z" fill="#efef08" stroke="#aaaa04" stroke-width="0.4"/>
<path d="M287.8 169.2 L294.4 166.6 L295.2 194 L286.5 190.8 Z" fill="#cccc05"/>
<path d="M294.4 166.6 L310.8 159 L311 166 L295 173 Z" fill="#fafa0a"/>
<ellipse cx="299.3" cy="194.6" rx="3.2" ry="1.6" fill="#ffffc8" opacity="0.55"/>
<!-- shoulder -->
<path d="M306 50 C295 52 287 55 282 59.5 L261 81.5 C256 86 250 89 243.4 92 C237 94 231 99 229 105 C225.5 118 226.5 135 231 148 C234 158 238 168 243 175 C248 181 252 184 258 184.2 C268 184.5 277 182 283 178 C288 174 291 168 295 158 C298 147 302 136 310 126 C316 119 322 115 326 112 L330 100 L318 52 Z" fill="#ebeb08" stroke="#77770a" stroke-width="0.87"/>
<path d="M305 50.5 C296 52.5 288 55.5 283 60 L263 83 C257 87 251 89 246 91 C240 94 234 99 231 105 L240 104 L262 96 L284 76 L296 64 L312 58 Z" fill="#f9f909"/>
<path d="M296 62 L318 56 L328 100 L322 112 L310 124 L300 136 L296 120 L296 96 Z" fill="#f4f409"/>
<g filter="url(#bl2)"><path d="M231.5 103 C238 99.5 243 97.5 246.5 95.5 C252 93.5 258 90 264 85 C268 81 272 77 275 74 C278.5 70.5 281 67 283.5 64.5 C286 68 288 74 290 80 C292 87 293.5 96 295.5 103 C296 105 296.5 106 296.5 107 C296 112 294.5 118 291.6 123.2 C289 130 286.5 136 284 141 C281.5 147 279 152 276.3 156.3 C272 161 268 165 264.8 169 C262.5 174 260 178 258.5 182 C254 183 249.5 181 246 177 C241 171 237 162 233.5 152 C229 138 227.5 120 231.5 104.5 Z" fill="url(#sh)"/></g>
<path d="M231 105 C228.5 118 229 134 233 146" fill="none" stroke="#e1e107" stroke-width="1"/>
<path d="M300 53 L308 66 M303 60 L306.5 59" stroke="#77770a" stroke-width="0.72" fill="none"/>
<path d="M318 104 L336 104 L342 138 L324 138 Z" fill="#f1f109"/>
<!-- small bracket -->
<path d="M310 118 L317 113 L322 112 L323 118 L318 121 L312 122 Z" fill="#f9f909" stroke="#77770a" stroke-width="0.72"/>
<!-- upper arm : outer body -->
<path d="M307 32 L307.5 45 L315 67.5 L325 102.5 L337.5 137.5 L348.8 161 L354 163.8 L360 163.8 L382.5 155 L402 146 L403 140 L396 110 L391.5 90 L389.5 84 C396 82 400 74 401 66 C401.6 56 399 44 392.5 32 Z" fill="#eded07" stroke="#77770a" stroke-width="0.87"/>
<!-- joint bulge shading -->
<path d="M378 32 L392.5 32 C399 44 401.6 56 401 66 C400 74 396 82 391 84 L386 78 Z" fill="#e9e907"/>
<path d="M394 36 C399 46 401.2 56 400.6 66 C400 73 397 80 392 83.5 C396 76 398 66 397.5 56 C397 48 396 42 394 36Z" fill="#cccc05"/>
<!-- left border strip -->
<path d="M307 32 L307.5 45 L315 67.5 L325 102.5 L337.5 137.5 L348.8 161 L354 163.8 L358 158 L334 105 L320 55 L315 32 Z" fill="#f2f209"/>
<!-- arm under-side shadow near elbow -->
<path d="M326 105 L337.5 137.5 L348.8 161 L354 163.8 L357 158 L345 130 L336 104 Z" fill="#c2c204"/>
<!-- inner flat panel -->
<path d="M315 32 L375 32 L384 80 L397.5 139 L396.5 146.5 L360 160 L357 155 L333.8 105 L320 55 Z" fill="#fbfb0a" stroke="#8a8a08" stroke-width="0.72"/>
<path d="M315.5 33 L331 33 L332.5 55 L346 105 L362.5 152.5 L358.6 156.6 L357 155 L333.8 105 L320 55 Z" fill="url(#bev)"/>
<path d="M315 32 L320 55 L333.8 105 L357 155 L360 160" fill="none" stroke="#77770a" stroke-width="0.87"/>
<!-- elbow joint -->
<path d="M337.5 156.5 L342 183.5 L352 186 L389 181 L401.5 173 L400 167 L396 150 L382 155.5 L360 164 L349 161.5 Z" fill="#ebeb07" stroke="#77770a" stroke-width="0.72"/>
<path d="M371 172.5 L388 167.6 C390.5 167 391.5 170 389 171 L372.5 176 C369.5 176.6 368.8 173.4 371 172.5 Z" fill="#fafa09" stroke="#55550a" stroke-width="0.5"/>
<!-- forearm -->
<path d="M337.5 185 L342.5 183.7 L388 180.5 L401.6 172.5 L413.3 168 L420.6 173.5 L424.2 199 L429.5 229 L435.2 259 L436.2 273 L430 284.5 L414 294 L365 297.5 L360 285 L350 260 L342.5 222.5 Z" fill="#f9f909" stroke="#77770a" stroke-width="0.87"/>
<path d="M337.5 185 L342.5 183.7 L347 186 L354 222 L362 258 L372 290 L365 297.5 L360 285 L350 260 L342.5 222.5 Z" fill="#dddd06"/>
<path d="M388.8 182.5 L398.8 221" stroke="#8a8a08" stroke-width="0.72" stroke-dasharray="1 0.8" fill="none"/>
<path d="M356 190 L365 232 L374 262" stroke="#b2b204" stroke-width="0.4" stroke-dasharray="0.8 0.8" fill="none"/>
<path d="M344 204 l2.5 -0.5 l1 4 l-2.5 0.5z M346 214 l2.5 -0.5 l0.8 3.4 l-2.5 0.5z M347.6 220 l2.5 -0.5 l0.8 3.4 l-2.5 0.5z M349.2 226 l2.5 -0.5 l0.8 3.4 l-2.5 0.5z" fill="#f6f66a" stroke="#77770a" stroke-width="0.43"/>
<circle cx="407.5" cy="195" r="5" fill="none" stroke="#8c8c0a" stroke-width="0.6"/><circle cx="407.5" cy="195" r="3" fill="none" stroke="#8c8c0a" stroke-width="0.5"/><circle cx="407.5" cy="195" r="1.3" fill="none" stroke="#8c8c0a" stroke-width="0.4"/>
<path d="M405 203 v10 M408 203.5 v3 M410 203.5 v3 M408 208 v4 M410.5 208 v4" stroke="#b6b604" stroke-width="0.6" stroke-dasharray="1 0.7"/>
<!-- motor cover on forearm -->
<path d="M383 231 C392 228 410 225 418 225 C422 232 426 256 425.5 270 L423 276 L392 286 L388 280 L381 250 Z" fill="#fbfb0a" stroke="#77770a" stroke-width="0.72"/>
<path d="M383 231 L381 250 L388 280 L392 286 L395 283 L390 262 L386 240 Z" fill="#d2d205"/>
<path d="M395 266 L420 258 L424 272 L423 276 L392 286 L390 276 Z" fill="#eded08" stroke="#8a8a08" stroke-width="0.58"/>
<path d="M386 240 C394 236 410 233 418 233" fill="none" stroke="#b6b604" stroke-width="0.5"/>
<path d="M418 225 C424 236 428 254 428 268 L425.5 270 C426 256 422 232 418 225Z" fill="#c8c804"/>
<!-- wrist -->
<path d="M365 297.5 L416 294 L422.5 301 C420 312 405 320 390 320 C376 320 363 315 360 307.5 Z" fill="#ebeb07" stroke="#77770a" stroke-width="0.72"/>
<path d="M360 303 C362 298 368 297 372 298 L372 306 L362 310 Z" fill="#fafa09" stroke="#77770a" stroke-width="0.58"/>
<path d="M413 296 C418 294 423 296 423 300 C423 304 418 306 414 305 Z" fill="#fafa09" stroke="#77770a" stroke-width="0.58"/>
<path d="M362 307 C370 314 392 316 408 309" fill="none" stroke="#77770a" stroke-width="0.87"/>
<path d="M372 300 C380 304 398 304 412 298" fill="none" stroke="#8a8a08" stroke-width="0.72"/>
<!-- gripper -->
<path d="M378 318 L401 316 L401.5 345.5 L381 348 Z" fill="#e9e907" stroke="#77770a" stroke-width="0.72"/>
<path d="M384 320 L385 347 M389.5 319.5 L390.5 346.5 M395 319 L396 346" stroke="#6a6a06" stroke-width="0.8"/>
<path d="M367.5 330 L377 327.5 L377.5 341 L368 343 Z" fill="#f9f909" stroke="#77770a" stroke-width="0.72"/>
<path d="M397.5 326 L405 325 L405 337 L398 338 Z" fill="#f9f909" stroke="#77770a" stroke-width="0.72"/>
<!-- pen -->
<path d="M370.5 343 L375.5 342 L374.8 356 L371.6 366.5 L370.4 366 L370.2 356 Z" fill="#e5e505" stroke="#77770a" stroke-width="0.58"/>
</g>
<!-- axis triad -->
<g filter="url(#bl)">
<path d="M123.5 457.5 L123.2 448" stroke="#2a33c8" stroke-width="1.6"/>
<path d="M123.5 457.5 L130 448.5" stroke="#2aa83c" stroke-width="1.4"/>
<path d="M123.5 457.5 L134.5 463.5" stroke="#d92626" stroke-width="1.6"/>
<path d="M121.7 449.5 L123.2 445.5 L124.8 449.5Z" fill="#2a33c8"/>
<path d="M132 464.5 L137 465 L134 461Z" fill="#d92626"/>
<circle cx="123.3" cy="457.6" r="1.2" fill="#e8e8e8"/>
<g font-family="Liberation Sans, sans-serif" font-size="6" fill="#cbcb0e"><text x="123.6" y="445.6">Z</text><text x="132.6" y="445.6">Y</text><text x="137.4" y="467.4">X</text></g>
</g>
<!-- mouse cursor -->
<path d="M417.5 431.5 L417.5 439.6 L419.4 437.9 L420.7 440.8 L421.7 440.3 L420.5 437.5 L423 437.3 Z" fill="#f4f4f4" stroke="#333" stroke-width="0.5" filter="url(#bl)"/>
</svg><div class="hdr" style="left:100.80px;top:481.00px;width:696.00px;height:14.60px;"></div><div class="t" style="left:103.70px;top:483.60px;font-size:8px;color:#1a1a1a;-webkit-text-stroke:0.25px #1a1a1a">输出</div><div class="a" style="left:100.80px;top:497.60px;width:696.00px;height:22.20px;background:#fff;border-bottom:1px solid #777;border-top:0.6px solid #c4c4c4;overflow:hidden"></div><div class="a" style="left:786.50px;top:498.40px;width:10.00px;height:20.40px;background:#f4f4f4"></div><svg class="a" style="left:786.5px;top:497px" width="10" height="21" viewBox="0 0 10 21"><path d="M3 8 L5 6 L7 8 M3 15.5 L5 17.5 L7 15.5" fill="none" stroke="#333" stroke-width="0.9"/></svg><div class="t" style="left:103.70px;top:499.60px;font-size:7.6px;color:#111">已就绪。</div><div class="a" style="left:103.7px;top:510px;height:8.3px;overflow:hidden;width:400px"><div style="font-size:7.6px;line-height:10px;color:#111;letter-spacing:-0.05px">2021年01月23日 10:06:24 : 轨迹点： 第1个， 状态： 不可达！</div></div><div class="a" style="left:100.80px;top:519.40px;width:696.00px;height:14.40px;background:#f0f0f0"></div><svg class="a" style="left:100.8px;top:519.4px" width="130" height="14.4" viewBox="101.8 520.4 130 14.4"><g fill="#222"><path d="M105.6 525.4 v4 h0.7 v-4z M108.6 525.4 l-2.2 2 l2.2 2z"/><path d="M117 525.4 l-2.2 2 l2.2 2z"/><path d="M124 525.4 l2.2 2 l-2.2 2z"/><path d="M132.4 525.4 l2.2 2 l-2.2 2z M134.9 525.4 v4 h0.7 v-4z"/></g><path d="M140.5 520.6 L146 532.6 H163.5 L169 520.6" fill="#fff" stroke="#444" stroke-width="0.7"/><path d="M169 520.6 L166 527 M166.5 526 L169.5 532.6 H187 L192.5 520.6 M192.5 520.6 L189.5 527 M190 526 L193 532.6 H212 L217.5 520.6" fill="none" stroke="#444" stroke-width="0.7"/></svg><div class="t" style="left:145.80px;top:520.60px;font-size:8.3px;font-weight:bold;color:#111">生成</div><div class="t" style="left:169.80px;top:520.60px;font-size:8.1px;color:#111">调试</div><div class="t" style="left:194.40px;top:520.60px;font-size:8.1px;color:#111">后置</div><div class="a" style="left:0.00px;top:534.80px;width:976.00px;height:0.70px;background:#dcdcdc"></div><div class="t" style="left:0.80px;top:536.30px;font-size:7.4px;color:#222">就绪</div><div class="t" style="left:923.50px;top:537.60px;font-size:7.4px;color:#8a8a8a;letter-spacing:-0.1px">CAP</div><div class="t" style="left:940.30px;top:537.60px;font-size:7.4px;color:#111;letter-spacing:-0.1px">NUM</div><div class="t" style="left:959.30px;top:537.60px;font-size:7.4px;color:#8a8a8a;letter-spacing:-0.1px">SCRL</div><div class="hdr" style="left:799.20px;top:31.00px;width:176.50px;height:15.00px;"></div><div class="t" style="left:801.70px;top:33.60px;font-size:8px;color:#1a1a1a;-webkit-text-stroke:0.25px #1a1a1a">后置</div><div class="lab" style="left:819.50px;top:60.20px;">主机器人IP:</div><div class="inp" style="left:861.00px;top:57.70px;width:56.70px;height:12.60px;line-height:11.20px;padding-left:2.6px"></div><div class="lab" style="left:819.50px;top:78.40px;">从机器人IP:</div><div class="inp" style="left:861.00px;top:76.30px;width:56.70px;height:12.70px;line-height:11.30px;padding-left:2.6px">192.168.41.63</div><div class="lab" style="left:828.60px;top:97.60px;">服务器端口号:</div><div class="inp" style="left:878.00px;top:95.40px;width:28.50px;height:12.00px;line-height:10.60px;padding-left:2.6px">3000</div><div class="btn d" style="left:930.80px;top:67.80px;width:39.50px;height:11.20px;line-height:10.00px">连接机器人</div><div class="btn" style="left:930.80px;top:89.00px;width:39.50px;height:11.20px;line-height:10.00px">断开机器人</div><div class="a" style="left:800.50px;top:118.00px;width:174.00px;height:185.20px;border:0.6px solid #dadada"></div><div class="a" style="left:803.00px;top:114.00px;width:26.00px;height:8.00px;background:#f0f0f0"></div><div class="lab" style="left:803.80px;top:114.00px;">主机器人</div><div class="lb" style="left:802.70px;top:123.80px;width:123.70px;height:173.60px;"></div><div class="a" style="left:822.00px;top:124.40px;width:0.50px;height:163.00px;background:#ececec"></div><div class="a" style="left:852.90px;top:124.40px;width:0.50px;height:163.00px;background:#ececec"></div><div class="a" style="left:883.80px;top:124.40px;width:0.50px;height:163.00px;background:#ececec"></div><div class="a" style="left:896.20px;top:124.40px;width:0.50px;height:163.00px;background:#ececec"></div><div class="a" style="left:908.20px;top:124.40px;width:0.50px;height:163.00px;background:#ececec"></div><div class="a" style="left:921.00px;top:124.40px;width:0.50px;height:163.00px;background:#ececec"></div><div class="a" style="left:803.30px;top:135.90px;width:122.50px;height:0.50px;background:#f0f0f0"></div><div class="a" style="left:803.30px;top:145.80px;width:122.50px;height:0.50px;background:#f0f0f0"></div><div class="a" style="left:803.30px;top:155.70px;width:122.50px;height:0.50px;background:#f0f0f0"></div><div class="a" style="left:803.30px;top:165.60px;width:122.50px;height:0.50px;background:#f0f0f0"></div><div class="a" style="left:803.30px;top:175.50px;width:122.50px;height:0.50px;background:#f0f0f0"></div><div class="a" style="left:803.30px;top:185.40px;width:122.50px;height:0.50px;background:#f0f0f0"></div><div class="a" style="left:803.30px;top:195.30px;width:122.50px;height:0.50px;background:#f0f0f0"></div><div class="a" style="left:803.30px;top:205.20px;width:122.50px;height:0.50px;background:#f0f0f0"></div><div class="a" style="left:803.30px;top:215.10px;width:122.50px;height:0.50px;background:#f0f0f0"></div><div class="a" style="left:803.30px;top:225.00px;width:122.50px;height:0.50px;background:#f0f0f0"></div><div class="a" style="left:803.30px;top:234.90px;width:122.50px;height:0.50px;background:#f0f0f0"></div><div class="a" style="left:803.30px;top:244.80px;width:122.50px;height:0.50px;background:#f0f0f0"></div><div class="a" style="left:803.30px;top:254.70px;width:122.50px;height:0.50px;background:#f0f0f0"></div><div class="a" style="left:803.30px;top:264.60px;width:122.50px;height:0.50px;background:#f0f0f0"></div><div class="a" style="left:803.30px;top:274.50px;width:122.50px;height:0.50px;background:#f0f0f0"></div><div class="a" style="left:803.30px;top:284.40px;width:122.50px;height:0.50px;background:#f0f0f0"></div><div class="sm" style="left:807.40px;top:127.00px;color:#333">行号</div><div class="sm" style="left:824.50px;top:127.00px;color:#333">轨迹名称</div><div class="sm" style="left:855.40px;top:127.00px;color:#333">轨迹顺序</div><div class="sm" style="left:887.20px;top:127.00px;color:#333">X</div><div class="sm" style="left:900.60px;top:127.00px;color:#333">Y</div><div class="sm" style="left:913.30px;top:127.00px;color:#333">Z</div><div class="a" style="left:803.50px;top:287.80px;width:122.10px;height:8.70px;background:#f7f7f7"></div><div class="a" style="left:813.60px;top:288.40px;width:46.20px;height:7.80px;background:#cdcdcd"></div><svg class="a" style="left:803.3px;top:287.8px" width="122.5" height="9" viewBox="804.3 288.8 122.5 9"><path d="M809.4 291.4 L807.5 293.3 L809.4 295.2 M921 291.4 L922.9 293.3 L921 295.2" fill="none" stroke="#333" stroke-width="0.9"/></svg><div class="lab" style="left:930.00px;top:119.80px;">机器人型号:</div><div class="inp" style="left:931.00px;top:130.00px;width:36.60px;height:12.00px;line-height:10.60px;padding-left:2.6px"></div><svg class="a" style="left:960px;top:133.5px" width="6" height="5" viewBox="0 0 6 5"><path d="M1 1.4 L3 3.4 L5 1.4" fill="none" stroke="#444" stroke-width="0.8"/></svg><div class="lab" style="left:930.00px;top:151.40px;">速度:</div><div class="inp" style="left:946.50px;top:149.20px;width:21.10px;height:12.40px;line-height:11.00px;padding-left:2.6px">10</div><div class="lab" style="left:930.00px;top:167.20px;">IO口:</div><div class="inp" style="left:946.50px;top:165.30px;width:21.10px;height:12.00px;line-height:10.60px;padding-left:2.6px">1</div><div class="btn d" style="left:930.00px;top:186.40px;width:38.30px;height:10.40px;line-height:9.20px">更新列表</div><div class="btn d" style="left:928.00px;top:208.00px;width:42.00px;height:11.00px;line-height:9.80px">自动设置工具</div><div class="btn d" style="left:928.00px;top:222.80px;width:42.00px;height:11.00px;line-height:9.80px">手动设置工具</div><div class="btn d" style="left:930.00px;top:242.00px;width:39.00px;height:11.00px;line-height:9.80px">单步运行</div><div class="btn d" style="left:930.00px;top:258.00px;width:39.00px;height:10.80px;line-height:9.60px">连续运行</div><div class="btn d" style="left:929.60px;top:282.00px;width:39.40px;height:10.20px;line-height:9.00px">停止</div><div class="a" style="left:800.50px;top:315.40px;width:174.00px;height:184.60px;border:0.6px solid #dadada"></div><div class="a" style="left:803.00px;top:311.40px;width:26.00px;height:8.00px;background:#f0f0f0"></div><div class="lab" style="left:803.80px;top:311.40px;">从机器人</div><div class="lb" style="left:802.30px;top:320.40px;width:124.10px;height:174.80px;"></div><div class="a" style="left:822.00px;top:321.00px;width:0.50px;height:165.00px;background:#ececec"></div><div class="a" style="left:864.60px;top:321.00px;width:0.50px;height:165.00px;background:#ececec"></div><div class="a" style="left:895.70px;top:321.00px;width:0.50px;height:165.00px;background:#ececec"></div><div class="sm" style="left:806.60px;top:324.00px;color:#333">行号</div><div class="sm" style="left:824.80px;top:324.00px;color:#333">轨迹名称</div><div class="sm" style="left:867.90px;top:324.00px;color:#333">轨迹顺序</div><div class="sm" style="left:898.50px;top:324.00px;color:#333">X</div><div class="a" style="left:802.90px;top:473.00px;width:114.60px;height:9.00px;background:#eeeeee"></div><div class="sm" style="left:807.30px;top:335.50px;">1531</div><div class="sm" style="left:824.80px;top:335.50px;">环形轨迹27</div><div class="sm" style="left:867.90px;top:335.50px;">53</div><div class="sm" style="left:898.5px;top:335.50px;width:18.6px;overflow:hidden">263.44</div><div class="sm" style="left:807.30px;top:344.69px;">1532</div><div class="sm" style="left:824.80px;top:344.69px;">环形轨迹27</div><div class="sm" style="left:867.90px;top:344.69px;">53</div><div class="sm" style="left:898.5px;top:344.69px;width:18.6px;overflow:hidden">264.20(</div><div class="sm" style="left:807.30px;top:353.88px;">1533</div><div class="sm" style="left:824.80px;top:353.88px;">环形轨迹27</div><div class="sm" style="left:867.90px;top:353.88px;">53</div><div class="sm" style="left:898.5px;top:353.88px;width:18.6px;overflow:hidden">264.20(</div><div class="sm" style="left:807.30px;top:363.07px;">1534</div><div class="sm" style="left:824.80px;top:363.07px;">环形轨迹27</div><div class="sm" style="left:867.90px;top:363.07px;">53</div><div class="sm" style="left:898.5px;top:363.07px;width:18.6px;overflow:hidden">267.80</div><div class="sm" style="left:807.30px;top:372.26px;">1535</div><div class="sm" style="left:824.80px;top:372.26px;">环形轨迹27</div><div class="sm" style="left:867.90px;top:372.26px;">53</div><div class="sm" style="left:898.5px;top:372.26px;width:18.6px;overflow:hidden">270.72</div><div class="sm" style="left:807.30px;top:381.45px;">1536</div><div class="sm" style="left:824.80px;top:381.45px;">环形轨迹27</div><div class="sm" style="left:867.90px;top:381.45px;">53</div><div class="sm" style="left:898.5px;top:381.45px;width:18.6px;overflow:hidden">271.50</div><div class="sm" style="left:807.30px;top:390.64px;">1537</div><div class="sm" style="left:824.80px;top:390.64px;">环形轨迹27</div><div class="sm" style="left:867.90px;top:390.64px;">53</div><div class="sm" style="left:898.5px;top:390.64px;width:18.6px;overflow:hidden">272.27(</div><div class="sm" style="left:807.30px;top:399.83px;">1538</div><div class="sm" style="left:824.80px;top:399.83px;">环形轨迹27</div><div class="sm" style="left:867.90px;top:399.83px;">53</div><div class="sm" style="left:898.5px;top:399.83px;width:18.6px;overflow:hidden">272.27(</div><div class="sm" style="left:807.30px;top:409.02px;">1539</div><div class="sm" style="left:824.80px;top:409.02px;">环形轨迹27</div><div class="sm" style="left:867.90px;top:409.02px;">53</div><div class="sm" style="left:898.5px;top:409.02px;width:18.6px;overflow:hidden">269.19</div><div class="sm" style="left:807.30px;top:418.21px;">1540</div><div class="sm" style="left:824.80px;top:418.21px;">环形轨迹27</div><div class="sm" style="left:867.90px;top:418.21px;">53</div><div class="sm" style="left:898.5px;top:418.21px;width:18.6px;overflow:hidden">269.19</div><div class="sm" style="left:807.30px;top:427.40px;">1541</div><div class="sm" style="left:824.80px;top:427.40px;">环形轨迹27</div><div class="sm" style="left:867.90px;top:427.40px;">53</div><div class="sm" style="left:898.5px;top:427.40px;width:18.6px;overflow:hidden">267.67</div><div class="sm" style="left:807.30px;top:436.59px;">1542</div><div class="sm" style="left:824.80px;top:436.59px;">环形轨迹27</div><div class="sm" style="left:867.90px;top:436.59px;">53</div><div class="sm" style="left:898.5px;top:436.59px;width:18.6px;overflow:hidden">267.15(</div><div class="sm" style="left:807.30px;top:445.78px;">1543</div><div class="sm" style="left:824.80px;top:445.78px;">环形轨迹27</div><div class="sm" style="left:867.90px;top:445.78px;">53</div><div class="sm" style="left:898.5px;top:445.78px;width:18.6px;overflow:hidden">266.76(</div><div class="sm" style="left:807.30px;top:454.97px;">1544</div><div class="sm" style="left:824.80px;top:454.97px;">环形轨迹27</div><div class="sm" style="left:867.90px;top:454.97px;">53</div><div class="sm" style="left:898.5px;top:454.97px;width:18.6px;overflow:hidden">266.41:</div><div class="sm" style="left:807.30px;top:464.16px;">1545</div><div class="sm" style="left:824.80px;top:464.16px;">环形轨迹27</div><div class="sm" style="left:867.90px;top:464.16px;">53</div><div class="sm" style="left:898.5px;top:464.16px;width:18.6px;overflow:hidden">265.69</div><div class="sm" style="left:807.30px;top:473.35px;">1546</div><div class="sm" style="left:824.80px;top:473.35px;letter-spacing:-0.15px">自由轨迹点55</div><div class="sm" style="left:867.90px;top:473.35px;">54</div><div class="sm" style="left:898.5px;top:473.35px;width:18.6px;overflow:hidden">300.00(</div><div class="a" style="left:917.60px;top:321.00px;width:8.10px;height:165.00px;background:#f7f7f7"></div><div class="a" style="left:918.10px;top:467.70px;width:7.30px;height:9.20px;background:#cdcdcd"></div><svg class="a" style="left:917.6px;top:321px" width="8.3" height="165" viewBox="0 0 8.3 165"><path d="M2.2 6 L4.15 4 L6.1 6 M2.2 160 L4.15 162 L6.1 160" fill="none" stroke="#333" stroke-width="0.9"/></svg><div class="a" style="left:803.10px;top:486.00px;width:122.60px;height:8.30px;background:#f7f7f7"></div><div class="a" style="left:813.00px;top:486.60px;width:28.50px;height:7.50px;background:#cdcdcd"></div><svg class="a" style="left:802.9px;top:486px" width="123" height="8.7" viewBox="803.9 487 123 8.7"><path d="M809.8 489.4 L807.9 491.3 L809.8 493.2 M912.4 489.4 L914.3 491.3 L912.4 493.2" fill="none" stroke="#333" stroke-width="0.9"/></svg><div class="lab" style="left:930.20px;top:316.90px;">机器人型号:</div><div class="inp" style="left:930.20px;top:327.40px;width:37.20px;height:11.40px;line-height:10.00px;padding-left:2.6px">ABB</div><svg class="a" style="left:960px;top:330.6px" width="6" height="5" viewBox="0 0 6 5"><path d="M1 1.4 L3 3.4 L5 1.4" fill="none" stroke="#444" stroke-width="0.8"/></svg><div class="lab" style="left:930.20px;top:348.60px;">速度:</div><div class="inp" style="left:946.60px;top:346.70px;width:21.40px;height:11.80px;line-height:10.40px;padding-left:2.6px">10</div><div class="lab" style="left:930.20px;top:364.50px;">IO口:</div><div class="inp" style="left:946.60px;top:362.40px;width:21.40px;height:12.00px;line-height:10.60px;padding-left:2.6px">1</div><div class="btn" style="left:930.20px;top:384.30px;width:37.20px;height:10.90px;line-height:9.70px">更新列表</div><div class="btn" style="left:928.90px;top:411.00px;width:41.00px;height:10.40px;line-height:9.20px">自动设置工具</div><div class="btn" style="left:928.90px;top:425.50px;width:41.00px;height:10.60px;line-height:9.40px">手动设置工具</div><div class="btn" style="left:929.40px;top:446.20px;width:39.30px;height:10.20px;line-height:9.00px">单步运行</div><div class="btn d" style="left:929.40px;top:460.40px;width:39.30px;height:10.60px;line-height:9.40px">连续运行</div><div class="btn" style="left:929.40px;top:481.90px;width:39.30px;height:10.70px;line-height:9.50px">停止</div><div class="btn" style="left:815.50px;top:519.70px;width:39.20px;height:10.80px;line-height:9.60px">手动控制</div><div class="btn" style="left:871.20px;top:519.70px;width:37.20px;height:10.80px;line-height:9.60px">双机协同</div><div class="btn d" style="left:924.30px;top:519.70px;width:39.80px;height:10.80px;line-height:9.60px">停止</div></div></body></html>
